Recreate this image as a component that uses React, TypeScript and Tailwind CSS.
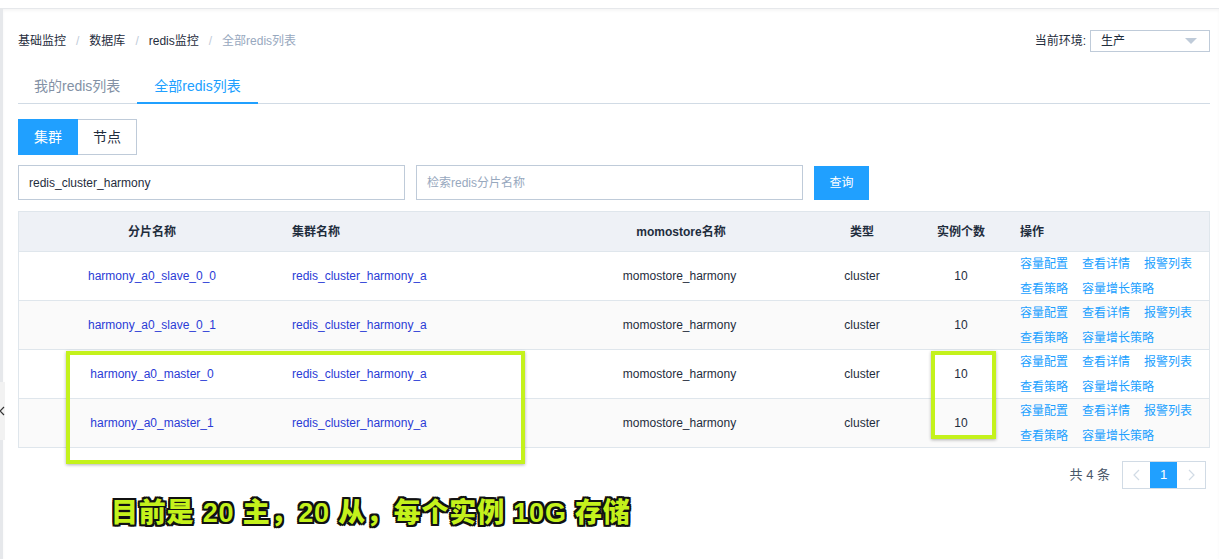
const font = "font-['Liberation_Sans','Noto_Sans_CJK_SC',sans-serif]";

const rows = [
  { shard: "harmony_a0_slave_0_0", cluster: "redis_cluster_harmony_a" },
  { shard: "harmony_a0_slave_0_1", cluster: "redis_cluster_harmony_a" },
  { shard: "harmony_a0_master_0", cluster: "redis_cluster_harmony_a" },
  { shard: "harmony_a0_master_1", cluster: "redis_cluster_harmony_a" },
];

const cols = "grid grid-cols-[266px_276px_240px_122px_76px_1fr]";

function Breadcrumb() {
  const items = ["基础监控", "数据库", "redis监控"];
  return (
    <div className="flex items-center text-[12px] text-[#1f2d3d]">
      {items.map((item) => (
        <span key={item} className="flex items-center">
          <span>{item}</span>
          <span className="mx-[10px] text-[#bfcbd9]">/</span>
        </span>
      ))}
      <span className="text-[#97a8be]">全部redis列表</span>
    </div>
  );
}

function EnvSelect() {
  return (
    <div className="flex items-center text-[12px] text-[#1f2d3d]">
      <span className="mr-[4px]">当前环境:</span>
      <div className="flex h-[22px] w-[120px] items-center justify-between border border-[#bfcbd9] pl-[10px] pr-[12px]">
        <span>生产</span>
        <span className="h-0 w-0 border-x-[6px] border-t-[6px] border-x-transparent border-t-[#bfcbd9]" />
      </div>
    </div>
  );
}

function Tabs() {
  return (
    <div className="mt-[18px] flex border-b border-[#d1dbe5] text-[14px]">
      <div className="-mb-px flex h-[34px] items-center border-b-2 border-transparent pl-[16px] pr-[17px] pt-[1px] text-[#8391a5]">
        我的redis列表
      </div>
      <div className="-mb-px flex h-[34px] items-center border-b-2 border-[#20a0ff] px-[17px] pt-[1px] text-[#20a0ff]">
        全部redis列表
      </div>
    </div>
  );
}

function Ops() {
  return (
    <div className="flex flex-col gap-[7px] text-[#20a0ff]">
      <div className="flex gap-[14px]">
        <span>容量配置</span>
        <span>查看详情</span>
        <span>报警列表</span>
      </div>
      <div className="flex gap-[14px]">
        <span>查看策略</span>
        <span>容量增长策略</span>
      </div>
    </div>
  );
}

function Table() {
  return (
    <div className="mt-[11px] border border-[#dfe6ec] text-[12px] text-[#1f2d3d]">
      <div className={`${cols} h-[39px] items-center bg-[#eef1f6] font-bold`}>
        <div className="text-center">分片名称</div>
        <div className="pl-[7px]">集群名称</div>
        <div className="text-center">momostore名称</div>
        <div className="text-center">类型</div>
        <div className="text-center">实例个数</div>
        <div className="pl-[21px]">操作</div>
      </div>
      {rows.map((row, i) => (
        <div
          key={row.shard}
          className={`${cols} h-[49px] items-center border-t border-[#dfe6ec] ${i % 2 === 1 ? "bg-[#fafafa]" : "bg-white"}`}
        >
          <div className="text-center text-[#2a3bd6]">{row.shard}</div>
          <div className="pl-[7px] text-[#2a3bd6]">{row.cluster}</div>
          <div className="pr-[3px] text-center">momostore_harmony</div>
          <div className="text-center">cluster</div>
          <div className="text-center">10</div>
          <div className="pl-[21px] pt-px">
            <Ops />
          </div>
        </div>
      ))}
    </div>
  );
}

function Pagination() {
  return (
    <div className="mt-[13px] flex items-center justify-end gap-[12px] pr-[4px] text-[13px] text-[#48576a]">
      <span>共 4 条</span>
      <div className="flex h-[28px] border border-[#d1dbe5]">
        <div className="flex w-[27px] items-center justify-center text-[#d1dbe5]">
          <svg width="7" height="12" viewBox="0 0 7 12" fill="none" stroke="currentColor" strokeWidth="1.2">
            <path d="M6 1 1 6l5 5" />
          </svg>
        </div>
        <div className="flex w-[27px] items-center justify-center bg-[#20a0ff] text-white">1</div>
        <div className="flex w-[28px] items-center justify-center text-[#d1dbe5]">
          <svg width="7" height="12" viewBox="0 0 7 12" fill="none" stroke="currentColor" strokeWidth="1.2">
            <path d="M1 1l5 5-5 5" />
          </svg>
        </div>
      </div>
    </div>
  );
}

export default function App() {
  return (
    <div className={`relative h-[559px] w-[1219px] overflow-hidden bg-white ${font}`}>
      <div className="h-[8px] bg-white" />
      <div className="h-[calc(100%-8px)] border-l-[3px] border-t border-[#e6e8eb] shadow-[inset_0_2px_3px_rgba(0,0,0,0.04)]">
        <div className="pl-[15px] pr-[9px] pt-[21px]">
          <div className="flex h-[22px] items-center justify-between">
            <Breadcrumb />
            <EnvSelect />
          </div>
          <Tabs />

          <div className="mt-[15px] flex text-[14px]">
            <div className="flex h-[36px] w-[60px] items-center justify-center bg-[#20a0ff] text-white">集群</div>
            <div className="flex h-[36px] w-[59px] items-center justify-center border border-l-0 border-[#bfcbd9] text-[#1f2d3d]">
              节点
            </div>
          </div>

          <div className="mt-[10px] flex items-center text-[12px]">
            <div className="flex h-[35px] w-[387px] items-center border border-[#bfcbd9] px-[10px] text-[#1f2d3d]">
              redis_cluster_harmony
            </div>
            <div className="ml-[11px] flex h-[35px] w-[387px] items-center border border-[#bfcbd9] px-[10px] text-[#97a8be]">
              检索redis分片名称
            </div>
            <div className="ml-[11px] flex h-[34px] w-[55px] items-center justify-center bg-[#20a0ff] text-white">
              查询
            </div>
          </div>

          <Table />
          <Pagination />
        </div>
      </div>

      {/* collapse handle on the left edge */}
      <div className="absolute left-0 top-[382px] flex h-[58px] w-[5px] items-center overflow-hidden bg-[#f2f2f2] text-[#333]">
        <svg width="5" height="10" viewBox="0 0 5 10" fill="none" stroke="currentColor" strokeWidth="1.2">
          <path d="M4 1 0 5l4 4" />
        </svg>
      </div>

      {/* annotation overlays */}
      <div className="pointer-events-none absolute left-[66px] top-[351px] h-[113px] w-[459px] border-[4px] border-[#c4f21c] shadow-[0_1px_3px_rgba(0,0,0,0.3)]" />
      <div className="pointer-events-none absolute left-[931px] top-[351px] h-[88px] w-[65px] border-[4px] border-[#c4f21c] shadow-[0_1px_3px_rgba(0,0,0,0.3)]" />
      <div className="absolute left-[111px] top-[495px] text-[27px] font-black leading-[36px] tracking-[0.8px] text-[#c4f21c] [text-shadow:-2px_-2px_0_#111,2px_-2px_0_#111,-2px_2px_0_#111,2px_2px_0_#111,0_-2px_0_#111,0_2px_0_#111,-2px_0_0_#111,2px_0_0_#111]">
        目前是 20 主，20 从，每个实例 10G 存储
      </div>
    </div>
  );
}
